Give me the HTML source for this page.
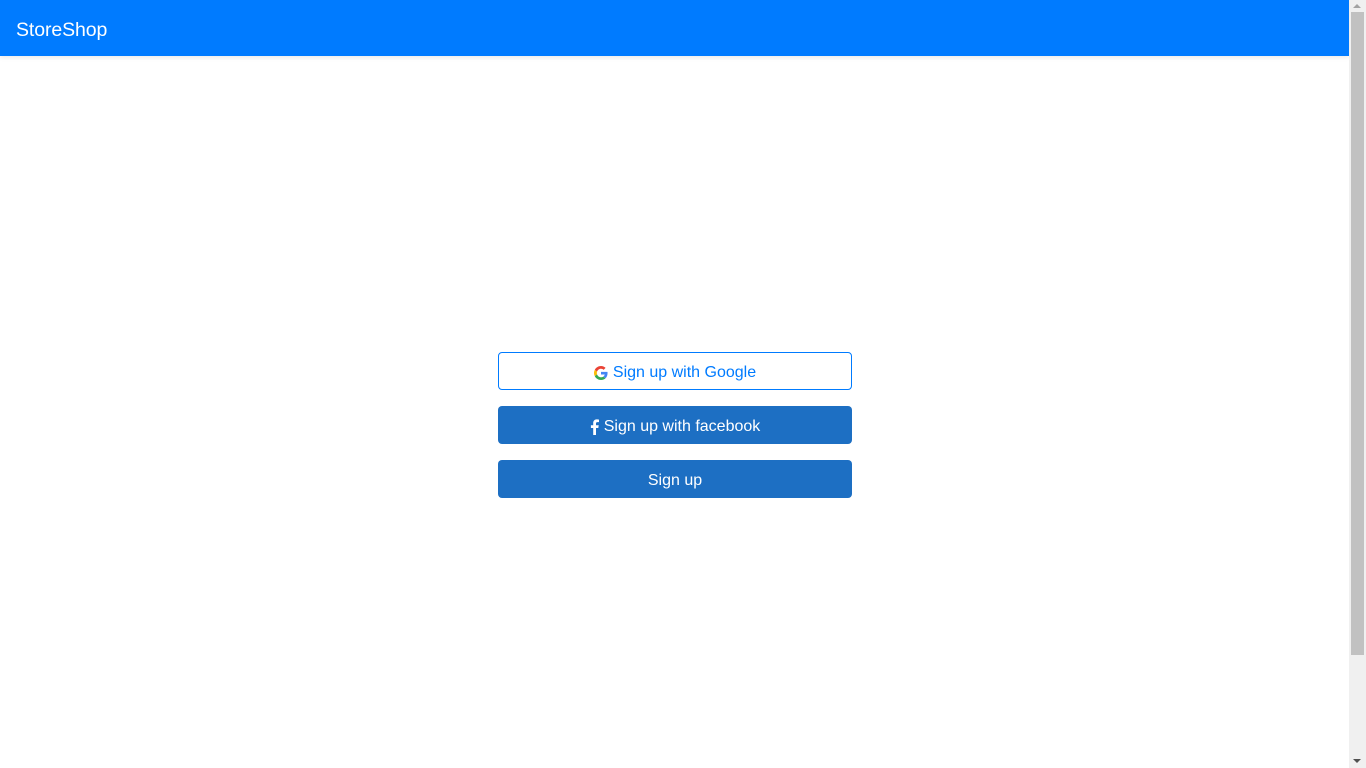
<!DOCTYPE html>
<html><head><meta charset="utf-8"><style>
*{box-sizing:border-box;margin:0;padding:0}
body{width:1366px;height:768px;overflow:hidden;background:#fff;font-family:"Liberation Sans",sans-serif;position:relative}
.nav{position:absolute;left:0;top:0;width:1349px;height:56px;background:#007bff;box-shadow:0 2px 4px rgba(0,0,0,.08)}
.nav span{position:absolute;left:16px;top:19px;color:#fff;font-size:19.5px;line-height:22px;letter-spacing:-0.1px}
.sb{position:absolute;left:1349px;top:0;width:17px;height:768px;background:#f0f0f0}
.th{position:absolute;left:2px;top:12px;width:13px;height:643px;background:#c1c1c1}
.up{position:absolute;left:4px;top:4px;width:0;height:0;border-left:4px solid transparent;border-right:4px solid transparent;border-bottom:4px solid #a3a3a3}
.dn{position:absolute;left:4px;top:759px;width:0;height:0;border-left:4px solid transparent;border-right:4px solid transparent;border-top:4px solid #505050}
.btn{position:absolute;left:498px;width:354px;height:38px;border-radius:4px;font-size:16px;display:flex;align-items:center;justify-content:center;gap:5px;padding-top:3px}
.g{top:352px;border:1px solid #007bff;color:#007bff;background:#fff}
.f{top:406px;background:#1d6fc3;color:#fff}
.s{top:460px;background:#1d6fc3;color:#fff}
</style></head><body>
<div class="nav"><span>StoreShop</span></div>
<div class="btn g"><svg width="14" height="14" viewBox="0 0 48 48"><path fill="#EA4335" d="M24 9.5c3.5 0 6.6 1.2 9 3.6l6.7-6.7C35.6 2.5 30.2 0 24 0 14.6 0 6.6 5.4 2.7 13.3l7.8 6C12.4 13.7 17.7 9.5 24 9.5z"/><path fill="#4285F4" d="M46.5 24.5c0-1.6-.1-3.1-.4-4.5H24v9h12.7c-.6 2.9-2.2 5.4-4.7 7.1l7.6 5.9c4.4-4.1 6.9-10.1 6.9-17.5z"/><path fill="#FBBC05" d="M10.5 28.7c-.5-1.5-.8-3-.8-4.7s.3-3.2.8-4.7l-7.8-6C1 16.6 0 20.2 0 24s1 7.4 2.7 10.7l7.8-6z"/><path fill="#34A853" d="M24 48c6.5 0 11.9-2.1 15.6-5.8L32 36.3c-2.1 1.4-4.8 2.3-8 2.3-6.3 0-11.6-4.2-13.5-9.9l-7.8 6C6.6 42.6 14.6 48 24 48z"/></svg>Sign up with Google</div>
<div class="btn f"><svg width="9" height="16" viewBox="0 0 9 16"><path fill="#fff" d="M6 16V9h2.3l.4-2.8H6V4.5c0-.8.3-1.4 1.4-1.4H9V.6C8.6.5 7.7.4 6.8.4 4.7.4 3.2 1.7 3.2 4v2.2H.9V9h2.3v7z"/></svg>Sign up with facebook</div>
<div class="btn s">Sign up</div>
<div class="sb"><div class="up"></div><div class="th"></div><div class="dn"></div></div>
</body></html>
